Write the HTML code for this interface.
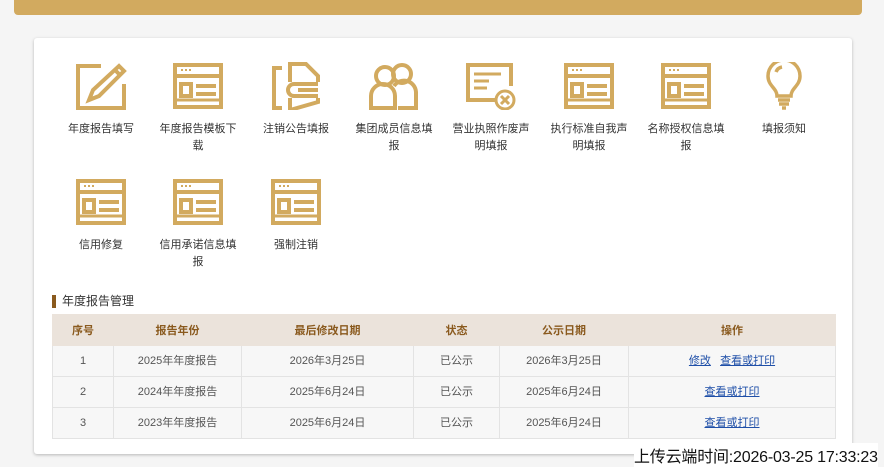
<!DOCTYPE html>
<html><head><meta charset="utf-8"><style>
body{margin:0;width:884px;height:467px;background:#f5f5f5;font-family:"Liberation Sans","Noto Sans CJK SC",sans-serif;position:relative;overflow:hidden}
.top{position:absolute;left:14px;top:-2px;width:848px;height:17px;background:#d2aa5f;border-radius:0 0 4px 4px;font-size:10px;color:#fff}
.card{position:absolute;left:34px;top:38px;width:818px;height:416px;background:#fff;border-radius:3px;box-shadow:0 1px 3px rgba(0,0,0,.25)}
.it{position:absolute;width:98px;text-align:center;font-size:11px;color:#333;line-height:17px}
.it span{display:block;width:80px;margin:0 auto}
.it svg{display:block;margin:0 auto 11px}
.sec{position:absolute;left:52px;top:295px;font-size:12px;color:#333;border-left:4px solid #8a5a1e;padding-left:6px;line-height:13px}
table{position:absolute;left:52px;top:314px;width:783px;border-collapse:collapse;font-size:11px;color:#555;table-layout:fixed}
th{background:#ebe3db;color:#8a5a1e;height:31px;padding:0;font-weight:bold;border:1px solid #ebe3db;box-sizing:border-box}
td{background:#f7f7f7;border:1px solid #e3e3e3;height:31px;padding:0;text-align:center;box-sizing:border-box;line-height:14px}
a{color:#1f4fa8;text-decoration:underline}
.up{position:absolute;left:634px;top:443px;font-size:16px;color:#111;background:#fff;letter-spacing:-0.2px}
</style></head><body>
<div class="top"></div>
<div class="card"></div>
<svg width="0" height="0" style="position:absolute"><defs>
<g id="win" fill="none" stroke="#d2aa5f" stroke-width="4"><rect x="3" y="3" width="46" height="42"/><line x1="3" y1="14" x2="49" y2="14"/><rect x="9" y="22" width="10" height="12"/><line x1="24" y1="24" x2="44" y2="24"/><line x1="24" y1="32" x2="44" y2="32"/><line x1="3" y1="38" x2="49" y2="38" stroke-width="3"/><g stroke-width="2"><line x1="9" y1="8" x2="11" y2="8"/><line x1="13" y1="8" x2="15" y2="8"/><line x1="17" y1="8" x2="19" y2="8"/></g></g>
</defs></svg>
<div class="it" style="left:52px;top:62px"><svg width="52" height="48"><g fill="none" stroke="#d2aa5f" stroke-width="4"><path d="M26 4H3V46H49V22"/><path d="M44 4L49 9L24 34L14 38L18 28Z"/><line x1="40" y1="8" x2="45" y2="13"/></g></svg><span>年度报告填写</span></div>
<div class="it" style="left:149px;top:62px"><svg width="52" height="48"><use href="#win"/></svg><span>年度报告模板下载</span></div>
<div class="it" style="left:247px;top:62px"><svg width="52" height="48"><g fill="none" stroke="#d2aa5f" stroke-width="4"><path d="M12 6H4V46H12"/><path d="M20 20V2H36L48 14V20M20 36V48L48 40V36"/><path d="M48 22H24A6 6 0 0 0 24 34H48"/><line x1="28" y1="28" x2="48" y2="28"/></g></svg><span>注销公告填报</span></div>
<div class="it" style="left:345px;top:62px"><svg width="52" height="48"><g fill="none" stroke="#d2aa5f" stroke-width="4"><circle cx="17" cy="14" r="9"/><circle cx="34" cy="12" r="9"/><path d="M3 46V34A12 12 0 0 1 27 34V46Z"/><path d="M26 24A12 12 0 0 1 48 30V46H30"/></g></svg><span>集团成员信息填报</span></div>
<div class="it" style="left:442px;top:62px"><svg width="52" height="48"><g fill="none" stroke="#d2aa5f" stroke-width="4"><path d="M30 38H3V3H46V24"/><line x1="9" y1="12" x2="36" y2="12" stroke-width="3"/><line x1="9" y1="19" x2="24" y2="19" stroke-width="3"/><line x1="9" y1="26" x2="22" y2="26" stroke-width="3"/><circle cx="40" cy="38" r="9" stroke-width="3"/><path d="M36 34L44 42M44 34L36 42" stroke-width="3"/></g></svg><span>营业执照作废声明填报</span></div>
<div class="it" style="left:540px;top:62px"><svg width="52" height="48"><use href="#win"/></svg><span>执行标准自我声明填报</span></div>
<div class="it" style="left:637px;top:62px"><svg width="52" height="48"><use href="#win"/></svg><span>名称授权信息填报</span></div>
<div class="it" style="left:735px;top:62px"><svg width="52" height="48"><g fill="none" stroke="#d2aa5f" stroke-width="3.5"><path d="M19 34C19 26 10 24 10 14A16 16 0 0 1 42 14C42 24 33 26 33 34Z"/><path d="M18 10A8 8 0 0 1 24 5"/><line x1="20" y1="38" x2="32" y2="38"/><line x1="21" y1="42" x2="31" y2="42"/><line x1="24" y1="46" x2="28" y2="46"/></g></svg><span>填报须知</span></div>
<div class="it" style="left:52px;top:178px"><svg width="52" height="48"><use href="#win"/></svg><span>信用修复</span></div>
<div class="it" style="left:149px;top:178px"><svg width="52" height="48"><use href="#win"/></svg><span>信用承诺信息填报</span></div>
<div class="it" style="left:247px;top:178px"><svg width="52" height="48"><use href="#win"/></svg><span>强制注销</span></div>
<div class="sec">年度报告管理</div>
<table>
<colgroup><col style="width:61px"><col style="width:128px"><col style="width:172px"><col style="width:86px"><col style="width:129px"><col style="width:207px"></colgroup>
<tr><th>序号</th><th>报告年份</th><th>最后修改日期</th><th>状态</th><th>公示日期</th><th>操作</th></tr>
<tr><td>1</td><td>2025年年度报告</td><td>2026年3月25日</td><td>已公示</td><td>2026年3月25日</td><td><a>修改</a>&nbsp;&nbsp;&nbsp;<a>查看或打印</a></td></tr>
<tr><td>2</td><td>2024年年度报告</td><td>2025年6月24日</td><td>已公示</td><td>2025年6月24日</td><td><a>查看或打印</a></td></tr>
<tr><td>3</td><td>2023年年度报告</td><td>2025年6月24日</td><td>已公示</td><td>2025年6月24日</td><td><a>查看或打印</a></td></tr>
</table>
<div class="up">上传云端时间:2026-03-25 17:33:23</div>
</body></html>
